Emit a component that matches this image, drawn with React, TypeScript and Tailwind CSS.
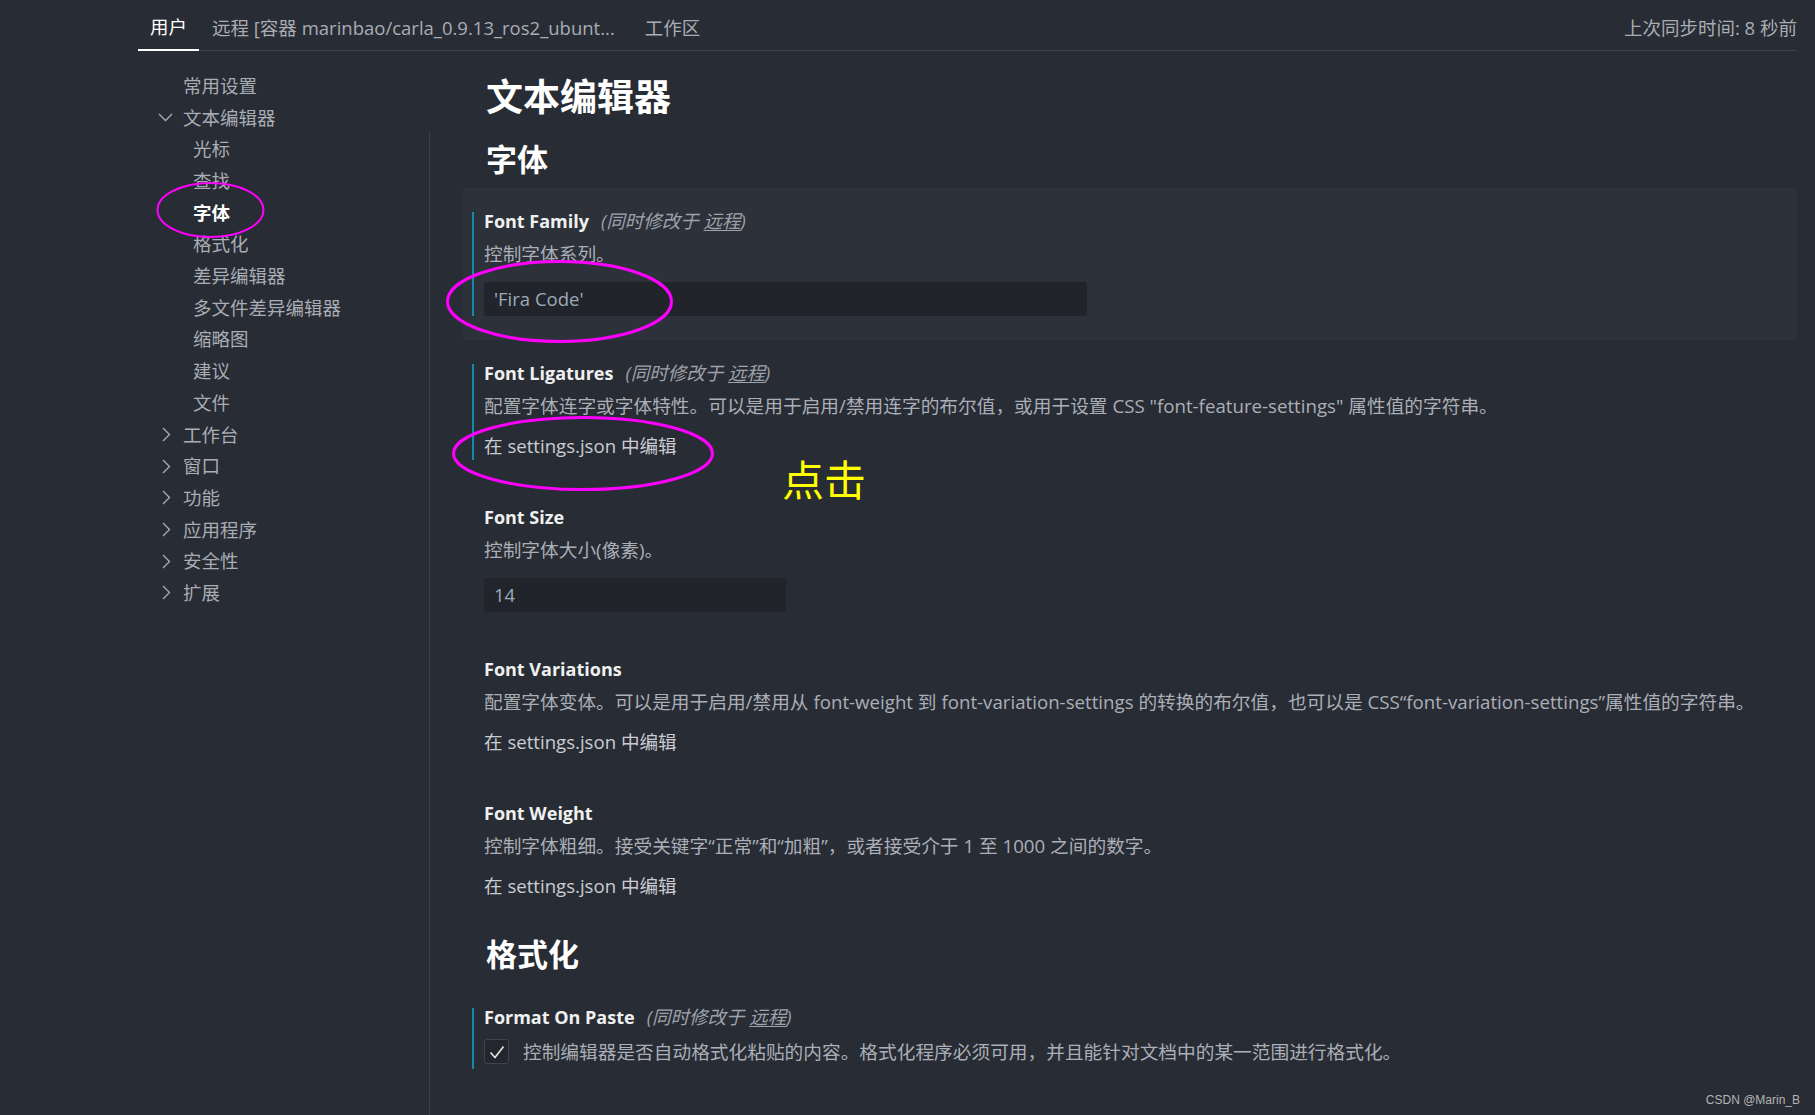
import React from "react";
import clsx from "clsx";

type NavItem = { label: string; level: 0 | 1; chevron?: "down" | "right"; active?: boolean };

const navItems: NavItem[] = [
  { label: "常用设置", level: 0 },
  { label: "文本编辑器", level: 0, chevron: "down" },
  { label: "光标", level: 1 },
  { label: "查找", level: 1 },
  { label: "字体", level: 1, active: true },
  { label: "格式化", level: 1 },
  { label: "差异编辑器", level: 1 },
  { label: "多文件差异编辑器", level: 1 },
  { label: "缩略图", level: 1 },
  { label: "建议", level: 1 },
  { label: "文件", level: 1 },
  { label: "工作台", level: 0, chevron: "right" },
  { label: "窗口", level: 0, chevron: "right" },
  { label: "功能", level: 0, chevron: "right" },
  { label: "应用程序", level: 0, chevron: "right" },
  { label: "安全性", level: 0, chevron: "right" },
  { label: "扩展", level: 0, chevron: "right" },
];

function Chevron({ dir }: { dir: "down" | "right" }) {
  if (dir === "down") {
    return (
      <svg width="15" height="9" viewBox="0 0 15 9" fill="none" className="text-[#a9adb4]">
        <path d="M1 1l6.5 6.5L14 1" stroke="currentColor" strokeWidth="1.3" />
      </svg>
    );
  }
  return (
    <svg width="9" height="15" viewBox="0 0 9 15" fill="none" className="ml-[4px] text-[#a9adb4]">
      <path d="M1 1l6.5 6.5L1 14" stroke="currentColor" strokeWidth="1.3" />
    </svg>
  );
}

function Sidebar() {
  return (
    <nav className="w-[291px] shrink-0 pl-[20px] pt-[19px]">
      {navItems.map((item) => (
        <div key={item.label} className="flex h-[31.7px] items-center text-[18.5px]">
          {item.level === 0 ? (
            <div className="flex w-[25px] items-center">{item.chevron && <Chevron dir={item.chevron} />}</div>
          ) : (
            <div className="w-[35px]" />
          )}
          <span className={clsx(item.active ? "font-bold text-white" : "text-[#a9adb4]")}>{item.label}</span>
        </div>
      ))}
    </nav>
  );
}

function Setting({
  title,
  modified,
  focused,
  children,
}: {
  title: string;
  modified?: boolean;
  focused?: boolean;
  children: React.ReactNode;
}) {
  return (
    <div className={clsx("py-6 pl-[9px]", focused && "bg-[#2c313a]")}>
      <div className="flex">
        <div className={clsx("w-[2px] shrink-0", modified && "bg-[#1b86ab]")} />
        <div className="flex-1 pl-[10px]">
          <div className="flex h-[18px] items-center whitespace-nowrap text-[18px] leading-[18px]">
            <span className="font-bold text-[#f0f0f0]">{title}</span>
            {modified && (
              <span className="ml-[12px] text-[18.5px] italic text-[#9ea2aa]">
                (同时修改于 <span className="underline underline-offset-2">远程</span>)
              </span>
            )}
          </div>
          {children}
        </div>
      </div>
    </div>
  );
}

function Desc({ children }: { children: React.ReactNode }) {
  return <div className="mt-3 h-6 whitespace-nowrap text-[18.7px] leading-6 text-[#abafb7]">{children}</div>;
}

function EditLink() {
  return <div className="mt-4 h-[26px] text-[18.6px] leading-6 text-[#c9ccd2]">在 settings.json 中编辑</div>;
}

function TextInput({ value, width }: { value: string; width: string }) {
  return (
    <div className={clsx("mt-4 flex h-[34px] items-center rounded-[3px] bg-[#21252b] pl-[10px] text-[18.5px] text-[#9fa9b6]", width)}>
      {value}
    </div>
  );
}

export default function App() {
  return (
    <div className="relative h-[1115px] w-[1815px] overflow-hidden bg-[#282c34] pl-[138px] pr-[18px] font-['Open_Sans','Noto_Sans_CJK_SC',sans-serif]">
      <header className="flex h-[51px] justify-between border-b border-[#3d424d]">
        <div className="flex">
          <div className="-mb-px flex h-[51px] items-center border-b-2 border-white px-3 pt-[5px] text-[18.5px] text-white">用户</div>
          <div className="flex h-[50px] items-center pl-[13px] pr-[15px] pt-[5px] text-[18.5px] text-[#a9adb4]">
            远程 [容器 marinbao/carla_0.9.13_ros2_ubunt...
          </div>
          <div className="flex h-[50px] items-center px-[15px] pt-[5px] text-[18.5px] text-[#a9adb4]">工作区</div>
        </div>
        <div className="flex items-center pt-[5px] text-[18.5px] text-[#a9adb4]">上次同步时间: 8 秒前</div>
      </header>

      <div className="flex h-[1064px]">
        <Sidebar />
        <div className="mt-[80px] w-px shrink-0 bg-[#3a3f4a]" />
        <main className="flex-1 pl-[33px]">
          <h1 className="pl-[23px] pt-6 text-[37px] font-bold leading-[44px] text-white">文本编辑器</h1>
          <h2 className="mt-[21px] pl-[23px] text-[31px] font-bold leading-[38px] text-white">字体</h2>

          <div className="mt-[10px]">
            <Setting title="Font Family" modified focused>
              <Desc>控制字体系列。</Desc>
              <TextInput value="'Fira Code'" width="w-[603px]" />
            </Setting>
            <Setting title="Font Ligatures" modified>
              <Desc>配置字体连字或字体特性。可以是用于启用/禁用连字的布尔值，或用于设置 CSS "font-feature-settings" 属性值的字符串。</Desc>
              <EditLink />
            </Setting>
            <Setting title="Font Size">
              <Desc>控制字体大小(像素)。</Desc>
              <TextInput value="14" width="w-[302px]" />
            </Setting>
            <Setting title="Font Variations">
              <Desc>
                配置字体变体。可以是用于启用/禁用从 font-weight 到 font-variation-settings 的转换的布尔值，也可以是 CSS“font-variation-settings”属性值的字符串。
              </Desc>
              <EditLink />
            </Setting>
            <Setting title="Font Weight">
              <Desc>控制字体粗细。接受关键字“正常”和“加粗”，或者接受介于 1 至 1000 之间的数字。</Desc>
              <EditLink />
            </Setting>
          </div>

          <h2 className="mt-[11px] pl-[23px] text-[31px] font-bold leading-[38px] text-white">格式化</h2>
          <div className="mt-[11px]">
            <Setting title="Format On Paste" modified>
              <div className="mt-[13px] flex h-[30px] items-start">
                <div className="flex h-[25px] w-[25px] items-center justify-center rounded-[3px] border border-[#3e4350] bg-[#23262d]">
                  <svg width="16" height="14" viewBox="0 0 16 14" fill="none">
                    <path d="M1.5 7.5l4.5 5L14.5 1.5" stroke="#e8e8e8" strokeWidth="1.6" />
                  </svg>
                </div>
                <span className="ml-[14px] whitespace-nowrap text-[18.7px] leading-[25px] text-[#abafb7]">
                  控制编辑器是否自动格式化粘贴的内容。格式化程序必须可用，并且能针对文档中的某一范围进行格式化。
                </span>
              </div>
            </Setting>
          </div>
        </main>
      </div>

      {/* annotations drawn over the screenshot */}
      <svg className="pointer-events-none absolute left-0 top-0" width="1815" height="1115" fill="none">
        <ellipse cx="210.5" cy="210" rx="53" ry="27" stroke="#ff00ff" strokeWidth="2" />
        <ellipse cx="559.5" cy="301.5" rx="112" ry="40" stroke="#ff00ff" strokeWidth="3" />
        <ellipse cx="583" cy="453.5" rx="129.5" ry="36" stroke="#ff00ff" strokeWidth="3" />
      </svg>
      <div className="absolute left-[782px] top-[459px] text-[42px] leading-[42px] text-[#ffff00]">点击</div>
      <div className="absolute right-[15px] top-[1091px] font-['Liberation_Sans',sans-serif] text-[12px] text-[#b4b4b4]">CSDN @Marin_B</div>
    </div>
  );
}
